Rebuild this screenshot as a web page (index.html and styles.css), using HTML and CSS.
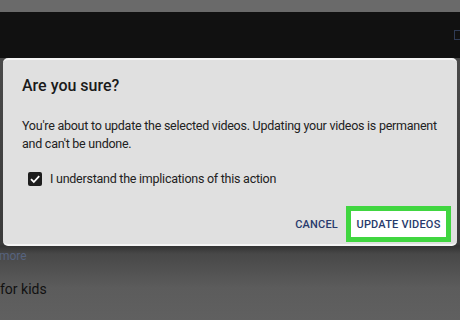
FILE: index.html
```html
<!DOCTYPE html>
<html lang="en">
<head>
  <meta charset="UTF-8" />
  <title>Are you sure?</title>
  <link rel="stylesheet" href="styles.css">
</head>
<body>

  <!-- page behind the modal -->
  <div class="page">
    <div class="top-strip"></div>
    <div class="app-bar">
      <span class="bar-icon"></span>
    </div>
    <div class="content">
      <div class="more-link">more</div>
      <div class="kids-row">for kids</div>
    </div>
  </div>

  <!-- confirm dialog -->
  <div class="dialog">
    <h2 class="dialog-title">Are you sure?</h2>
    <p class="dialog-text">You're about to update the selected videos. Updating your videos is permanent and can't be undone.</p>

    <label class="confirm-row">
      <span class="checkbox">
        <svg width="12" height="12" viewBox="0 0 12 12">
          <path d="M2 6.2 L4.8 9 L10.2 3.2" fill="none" stroke="#fff" stroke-width="1.8"/>
        </svg>
      </span>
      I understand the implications of this action
    </label>

    <div class="dialog-actions">
      <button class="btn btn-cancel">Cancel</button>
      <span class="highlight">
        <button class="btn btn-update">Update videos</button>
      </span>
    </div>
  </div>

</body>
</html>
```

FILE: styles.css
```css
html, body {
  margin: 0;
  padding: 0;
  font-family: Roboto, "Liberation Sans", sans-serif;
  overflow: hidden;
}

body {
  width: 460px;
  height: 320px;
  position: relative;
}

.page {
  display: flex;
  flex-direction: column;
  height: 320px;
}

.top-strip {
  height: 12px;
  background: #6a6a6a;
}

.app-bar {
  height: 46px;
  background: #111111;
  display: flex;
  justify-content: flex-end;
  align-items: center;
}

.bar-icon {
  width: 5px;
  height: 8px;
  border: 1px solid #2f3b55;
  border-right: none;
}

.content {
  flex: 1;
  background: linear-gradient(#4a4a4a, #3a3a3a 186px, #333 188px, #484848 196px, #5c5c5c 230px, #606060);
  padding-top: 190px;
}

.more-link {
  margin-left: -1px;
  font-size: 12px;
  color: #56637f;
  line-height: 16px;
}

.kids-row {
  margin-top: 17px;
  font-size: 14px;
  color: #111;
}

.dialog {
  position: absolute;
  top: 58px;
  left: 3px;
  width: 454px;
  height: 188px;
  box-sizing: border-box;
  background: #e0e0e0;
  border-top: 2px solid #f4f4f4;
  border-bottom: 2px solid #f4f4f4;
  border-radius: 5px;
  padding: 14px 20px 0 19px;
  color: #1a1a1a;
}

.dialog-title {
  margin: 0;
  font-size: 16px;
  font-weight: 500;
  line-height: 24px;
}

.dialog-text {
  margin: 19px 0 0;
  font-size: 12.5px;
  letter-spacing: -0.25px;
  line-height: 18px;
  color: #222;
}

.confirm-row {
  display: flex;
  align-items: center;
  gap: 8px;
  margin: 18px 0 0 6px;
  font-size: 12.5px;
  letter-spacing: -0.25px;
  color: #222;
}

.checkbox {
  width: 14px;
  height: 14px;
  background: #1e1e1e;
  border-radius: 2px;
  display: flex;
  justify-content: center;
  align-items: center;
}

.dialog-actions {
  display: flex;
  justify-content: flex-end;
  align-items: center;
  gap: 8px;
  margin-top: 20px;
  margin-right: -14px;
}

.btn {
  font-family: Roboto, "Liberation Sans", sans-serif;
  font-size: 11px;
  font-weight: 500;
  text-transform: uppercase;
  letter-spacing: 0.2px;
  color: #283a6c;
  background: none;
  border: none;
  padding: 0;
}

.highlight {
  display: flex;
  border: 5px solid #40d640;
}

.btn-update {
  background: #ffffff;
  width: 95px;
  height: 26px;
}
```
